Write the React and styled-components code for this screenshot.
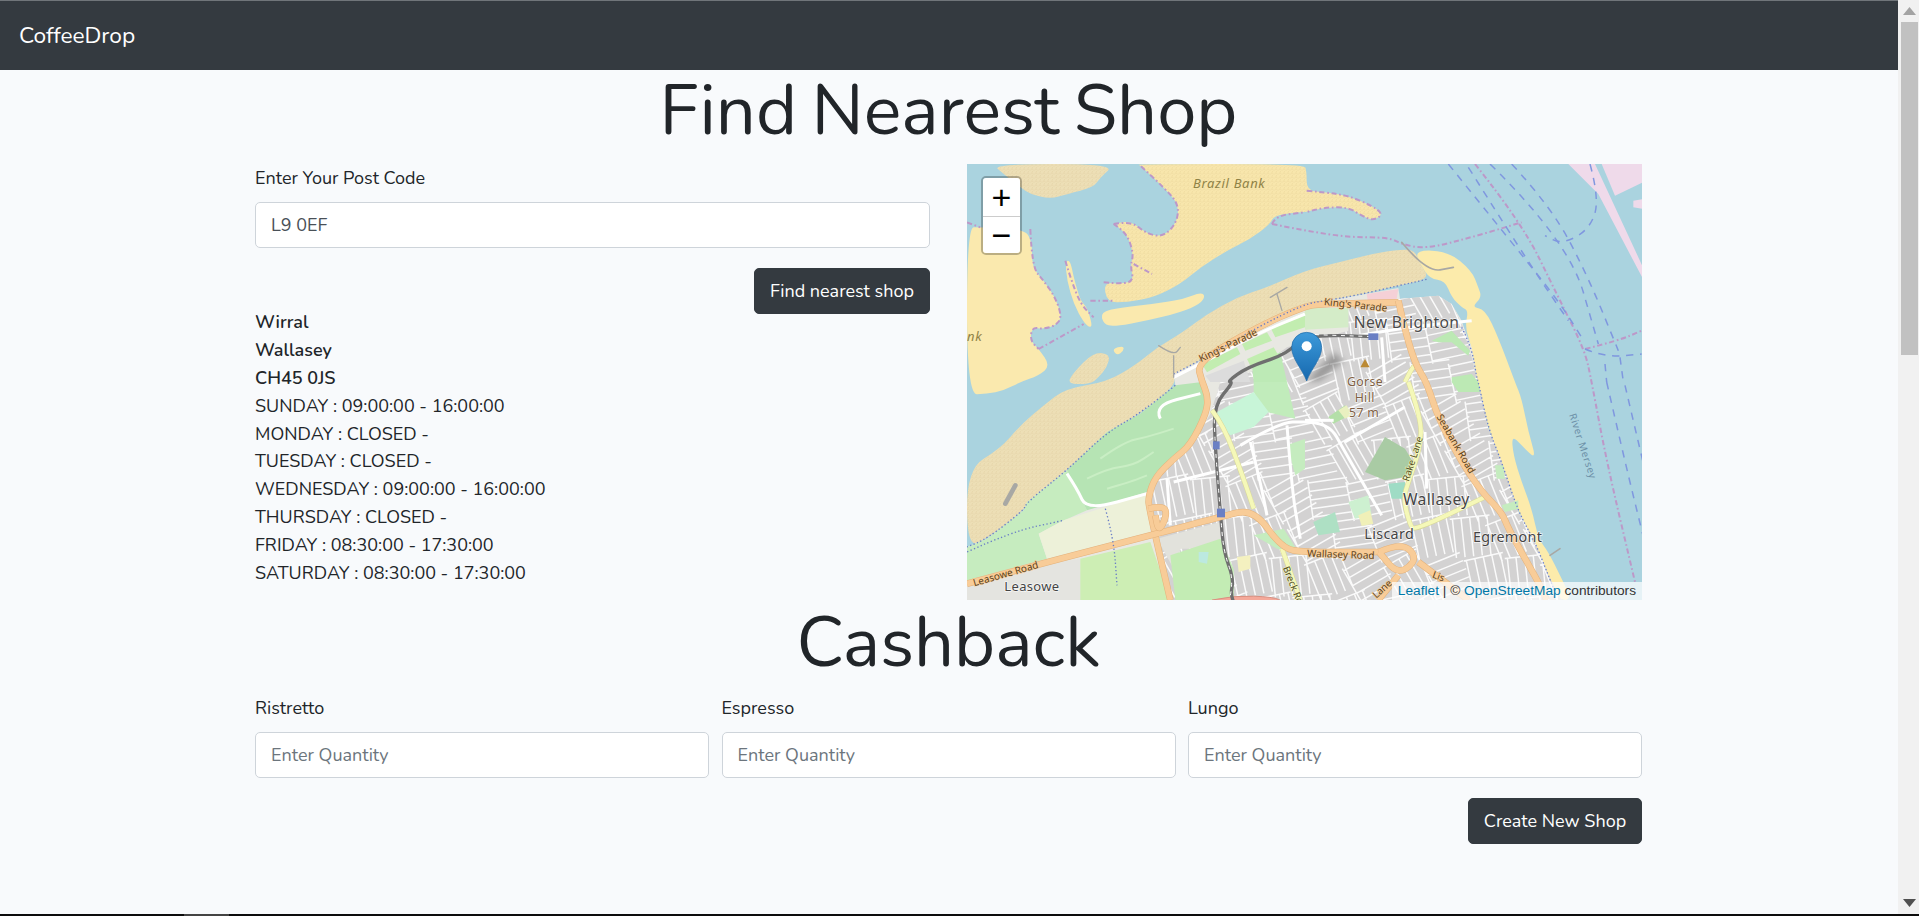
import React from "react";
import styled, { createGlobalStyle } from "styled-components";

const FONT = `"Nunito", "Lato", "Noto Sans", sans-serif`;

const GlobalStyle = createGlobalStyle`
  html, body {
    margin: 0;
    height: 100%;
    overflow: hidden;
    background: #f8fafc;
  }
  * { box-sizing: border-box; }
`;

const Page = styled.div`
  display: grid;
  grid-template-columns: 1fr 21px;
  grid-template-rows: 1fr 2px;
  width: 100%;
  height: 916px;
  overflow: hidden;
  font-family: ${FONT};
  font-size: 18px;
  line-height: 28px;
  color: #212529;
`;

const Main = styled.main`
  min-width: 0;
  overflow: hidden;
`;

const Navbar = styled.nav`
  display: flex;
  align-items: center;
  height: 70px;
  padding: 0 19px;
  background: #343a40;
  border-top: 1px solid #70757a;
`;

const Brand = styled.a`
  font-size: 22.7px;
  color: #fff;
`;

const Container = styled.div`
  width: 1387px;
  margin-left: 255px;
`;

const Title = styled.h1`
  margin: 0;
  height: ${(p) => p.$height}px;
  padding-top: ${(p) => p.$top}px;
  font-size: 70.5px;
  font-weight: 400;
  line-height: 82px;
  word-spacing: -3.6px;
  text-align: center;
`;

const TwoColumns = styled.div`
  display: grid;
  grid-template-columns: 675px 675px;
  column-gap: 37px;
`;

const ThreeColumns = styled.div`
  display: grid;
  grid-template-columns: repeat(3, 1fr);
  column-gap: 12.5px;
`;

const Field = styled.div`
  display: flex;
  flex-direction: column;
`;

const Label = styled.label`
  height: 28px;
  margin-bottom: 10px;
`;

const Input = styled.input`
  width: 100%;
  height: 46px;
  padding: 0 15px;
  font: inherit;
  color: #495057;
  background: #fff;
  border: 1px solid #ced4da;
  border-radius: 5px;
  &::placeholder { color: #6c757d; opacity: 1; }
`;

const ButtonRow = styled.div`
  display: flex;
  justify-content: flex-end;
  margin: 20px 0 ${(p) => p.$after}px;
`;

const Button = styled.button`
  height: 46px;
  width: ${(p) => p.$width}px;
  padding: 0;
  font: inherit;
  color: #fff;
  background: #343a40;
  border: 1px solid #343a40;
  border-radius: 5px;
`;

const Details = styled.div`
  display: flex;
  flex-direction: column;
`;

const Line = styled.div`
  height: 27.9px;
  font-weight: ${(p) => (p.$bold ? 600 : 400)};
`;

const MapFrame = styled.div`
  position: relative;
  height: 436px;
  overflow: hidden;
  background: #aad3df;
`;

const MapSvg = styled.svg`
  display: block;
  width: 675px;
  height: 436px;
`;

const ZoomControl = styled.div`
  position: absolute;
  left: 14px;
  top: 12px;
  width: 41px;
  border: 2px solid rgba(0, 0, 0, 0.25);
  border-radius: 5px;
  overflow: hidden;
  background-clip: padding-box;
`;

const ZoomButton = styled.a`
  display: flex;
  align-items: center;
  justify-content: center;
  height: 37.5px;
  font-family: "Liberation Sans", Arial, sans-serif;
  font-size: 34px;
  font-weight: 400;
  color: #000;
  background: #fff;
  & + & { border-top: 1px solid #ccc; }
`;

const Attribution = styled.div`
  position: absolute;
  right: 0;
  bottom: 0;
  height: 18px;
  padding: 0 6px;
  font-family: "Liberation Sans", Arial, sans-serif;
  font-size: 13.7px;
  line-height: 18px;
  color: #333;
  background: rgba(255, 255, 255, 0.7);
`;

const AttributionLink = styled.a`
  color: #0078a8;
`;

const Scrollbar = styled.aside`
  display: flex;
  flex-direction: column;
  align-items: center;
  padding-left: 2px;
  background: #f1f1f1;
`;

const ScrollArrow = styled.div`
  display: flex;
  align-items: center;
  justify-content: center;
  flex: none;
  height: 22px;
  width: 17px;
`;

const ScrollThumb = styled.div`
  flex: none;
  width: 17px;
  height: 333px;
  background: #c1c1c1;
`;

const ScrollSpace = styled.div`
  flex: 1;
`;

const BottomEdge = styled.div`
  grid-column: 1 / -1;
  background: #0c0c0c;
  display: flex;
`;

const BottomSegment = styled.div`
  margin-left: 184px;
  width: 45px;
  background: #444;
`;

// the map was traced from zoomed crops, every crop 1014 wide and 654 high
const shift = (s, dx, dy) =>
  s.trim().split(/\s+/).map((p) => {
    const [x, y] = p.split(",").map(Number);
    return [x + dx, y + dy];
  });
const q1 = (s) => shift(s, 0, 0);
const q2 = (s) => shift(s, 1014, 0);
const q3 = (s) => shift(s, 0, 654);
const q4 = (s) => shift(s, 1014, 654);

// rounds the corners of a traced outline
const curve = (pts, closed) => {
  const mid = (a, b) => [(a[0] + b[0]) / 2, (a[1] + b[1]) / 2];
  if (closed) {
    let d = `M${mid(pts[pts.length - 1], pts[0]).join(" ")}`;
    pts.forEach((p, i) => {
      d += `Q${p.join(" ")} ${mid(p, pts[(i + 1) % pts.length]).join(" ")}`;
    });
    return d + "Z";
  }
  let d = `M${pts[0].join(" ")}`;
  for (let i = 1; i < pts.length - 1; i++) {
    d += `Q${pts[i].join(" ")} ${mid(pts[i], pts[i + 1]).join(" ")}`;
  }
  return d + `L${pts[pts.length - 1].join(" ")}`;
};

const area = (pts) => curve(pts, true);
const way = (pts) => curve(pts, false);
const flat = (pts) => pts.map((p) => p.join(",")).join(" ");

const LOW_SAND = [
  q1("75,0 445,0 400,40 380,70 300,90 250,105 190,90 160,70 110,30"),
  q1("300,660 320,625 380,565 430,570 420,610 395,640 370,660"),
].map(area);

const BRAZIL_BANK = [
  ...q1("510,0 1010,0"), ...q2("5,20 5,80 60,85 130,95 200,125 235,150 205,170 170,155 130,130 60,130 0,145"),
  ...q1("990,145 920,155 910,180 850,225 780,260 700,310 640,360 560,400 480,415 420,415 410,355 465,360 500,350 490,305 500,270 480,210 440,180 490,170 540,210 590,218 630,175 635,120 590,70 520,5"),
];

const LEFT_SAND = [
  ...q1("0,190 40,190 170,195 195,230 195,310 230,350 265,400 285,460 265,485 230,495 195,490 190,530 215,555 250,605 215,635 160,654"),
  ...q3("110,26 60,36 0,38"),
];

const LENS = q1("400,445 460,430 560,420 650,405 700,385 715,395 700,420 640,445 540,470 440,488 410,480");
const FINGER = q1("295,290 310,290 320,340 340,410 360,430 375,480 370,492 350,475 320,420 300,350");
const SPECK = q1("435,555 470,545 470,560 450,575");

const DUNES = [
  ...q3("0,260 100,200 160,130 230,70 295,20"),
  ...q1("420,654 510,600 570,550 640,510 720,450 810,400 900,370 1014,320"),
  ...q2("100,295 200,270 290,255 330,260 345,300 375,345 280,365 150,395 60,410 0,420"),
  ...q1("870,490 700,590 620,630"),
  ...q3("625,10 520,95 420,150 300,265 180,360 170,385 60,470 0,495"),
];

const BEACH = [
  ...q2("330,258 430,262 500,320 520,370 530,400 500,430 540,435 580,520 630,654"),
  ...q4("650,50 670,150 695,235 650,190 620,160 625,220 650,300 680,380 700,470 730,510 770,590 800,654 760,654 730,580 690,480 640,390 590,240 550,140 520,0"),
  ...q2("515,640 500,550 480,490 490,440 470,430 440,400 420,350 375,345 345,300"),
];

const LAND = [
  ...q2("0,420 60,412 150,395 280,372 285,405 400,395 440,420 470,470 480,500 500,550 515,640"),
  ...q4("520,0 550,140 590,240 640,390 690,480 730,580 770,654"),
  ...q3("0,654 0,495 60,470 170,385 180,360 300,265 420,150 520,95 625,10"),
  ...q1("620,630 700,590 870,490"),
];

const URBAN =
  "960,550 1144,500 1144,432 1294,405 1414,395 1454,420 1494,500 1529,640 1534,654 1564,794 1604,894 1654,1044 1704,1134 1744,1234 1784,1308 600,1308 570,1100 545,1000 600,900 670,850 730,750 760,654 860,620";

// terraced streets: small blocks of parallel roads, turned block by block
const TERRACE_ANGLES = [-22, 68, -12, 78, -30, 60, 84, -8];
const terraces = () => {
  const size = 118;
  let d = "";
  for (let j = 0; j < 9; j++) {
    for (let i = 0; i < 11; i++) {
      const cx = 570 + i * size + (j % 2) * 47;
      const cy = 410 + j * size;
      const zone = cx > 1250 ? 0 : 2;
      const a = (TERRACE_ANGLES[(i * 3 + j * 5 + zone) % 8] * Math.PI) / 180;
      const [ux, uy] = [Math.cos(a), Math.sin(a)];
      for (let k = -2; k <= 2; k++) {
        const ox = cx - uy * k * 26;
        const oy = cy + ux * k * 26;
        d += `M${ox - (ux * size) / 2} ${oy - (uy * size) / 2}L${ox + (ux * size) / 2} ${oy + (uy * size) / 2}`;
      }
      // the cross streets closing the block
      d += `M${cx - ux * 59 - uy * 60} ${cy - uy * 59 + ux * 60}L${cx - ux * 59 + uy * 60} ${cy - uy * 59 - ux * 60}`;
    }
  }
  return d;
};
const TERRACES = terraces();

const GREENS = [
  ["#c6ecbf", q3("0,496 60,470 170,385 180,360 300,265 360,385 280,420 215,455 240,530 20,590 0,596")],
  ["#b6e4b4", q3("300,265 420,150 520,95 625,10 705,0 722,60 720,90 660,200 590,250 540,330 360,385")],
  ["#edf1d9", q3("215,455 290,415 540,335 550,450 240,530")],
  ["#e4e4e0", q3("0,610 240,545 340,530 340,654 0,654")],
  ["#cdeeb4", q3("340,530 550,480 610,654 340,654")],
  ["#e2e2dc", q3("570,470 760,420 770,500 640,500 620,560")],
  ["#c3ecb4", q3("610,520 760,470 800,560 800,654 625,654")],
  ["#c1ecbb", q3("860,0 960,0 985,110 900,90 860,30")],
  ["#c8f5d8", q3("750,90 860,30 905,90 860,135 790,160 760,130")],
  ["#bdeab6", q1("855,605 940,565 960,654 860,654")],
  ["#dcdcdc", q1("715,635 830,590 850,654 730,654")],
  ["#c2edb0", q1("705,600 810,550 820,570 720,625")],
  ["#c2edb0", q1("825,540 900,505 915,530 835,560")],
  ["#c2edb0", q1("910,490 1014,445 1014,490 925,520")],
  ["#c2edb0", q1("840,585 920,550 935,575 850,605")],
  ["#d4ecc8", q2("0,432 130,432 130,490 0,497")],
  ["#f5d0d6", q2("185,390 280,375 275,405 190,420")],
  ["#bce9b4", q2("380,530 440,500 495,560 490,575 440,535 400,535")],
  ["#bce9b4", q2("440,640 500,630 520,654 440,654")],
  ["#bce9b4", q4("440,0 520,0 525,30 460,30")],
  ["#a9cba4", q4("180,270 240,165 300,200 330,250 300,285 240,295")],
  ["#9fdcc5", q4("250,305 300,300 300,350 260,350")],
  ["#cdf0d0", q4("130,360 190,340 200,400 150,410")],
  ["#f0f0b8", q4("160,400 195,385 205,425 170,432")],
  ["#aee0c4", q4("25,420 90,390 105,450 40,460")],
  ["#b4dfa8", q4("70,105 120,70 135,100 85,125")],
  ["#e9f0c0", q4("100,85 125,70 140,100 120,110")],
  ["#c5ecbf", q4("570,250 595,250 600,290 575,290")],
  ["#c5ecbf", q4("590,370 640,355 640,380 600,390")],
  ["#c5ecbf", q3("860,460 950,440 1000,520 930,500")],
  ["#bce9e0", q3("695,510 725,510 720,545 695,540")],
  ["#f4f1c0", q3("810,525 850,520 850,560 815,570")],
  ["#c5ecbf", q3("960,190 1014,170 1014,260 985,280")],
];

const MAIN_ROADS = [
  [...q3("610,654 545,380 545,340 565,285 620,230 670,190 720,90 722,40 705,0"), ...q1("690,595 860,495 1014,425"), ...q2("60,420 280,415")],
  [...q2("280,410 295,480 330,600 365,654"), ...q4("400,110 470,240 530,330 590,390 610,440 660,530 700,600 725,654")],
  [...q3("0,605 240,540 550,460 760,405 860,380 945,500 1014,510"), ...q4("100,510 222,510")],
  q4("222,510 290,480 340,530 280,580 222,510"),
  q4("340,540 420,600 490,654"),
  q4("280,580 220,654"),
  q3("545,380 590,370 600,400 575,450 565,400"),
];

const YELLOW_ROADS = [
  q3("735,85 770,130 830,290 860,380"),
  q2("300,654 320,610 340,600"),
  q4("310,0 350,110 345,200 310,300 295,350 315,430 330,445 540,345"),
  q3("945,500 1000,654"),
];

const WHITE_ROADS = [
  q1("620,640 700,600 880,505 1014,450"),
  q3("580,110 560,70 700,35"),
  q3("300,275 330,320 360,385 540,335"),
  q3("620,300 860,240"),
  q3("820,190 940,120 1014,120"),
  q3("960,130 975,330 1000,470"),
  q3("850,180 880,300 900,400"),
  q3("600,290 610,430"),
  q4("0,120 70,120 120,210 230,400"),
  q4("120,180 300,75"),
  q3("1014,115 1100,115"),
  q2("130,520 300,490 500,470"),
  q2("230,520 240,654"),
  q4("360,150 365,320"),
];

const BOUNDARIES = [
  q1("440,180 490,170 540,210 590,218 630,175 635,120 590,70 520,5"),
  q1("410,355 465,360 500,350 490,305 500,270 480,210 440,180"),
  q1("500,300 555,330"),
  q1("295,290 310,340 340,420 380,460"),
  q1("0,175 40,190"),
  q1("190,195 195,310 230,350 265,400 285,460 265,485 230,495 195,490 190,530 215,555"),
  q1("215,555 350,480"),
  q1("370,410 440,410"),
  [...q1("915,180 1014,200"), ...q2("130,220 250,220 290,240 360,255 500,220 650,175")],
  q1("915,180 925,155 1014,145"),
  q2("5,80 60,85 130,95 200,125 235,150 205,170 170,155 130,130 60,130 0,145"),
  [...q2("510,0 650,175 760,400 840,560 860,654"), ...q4("905,240 990,600")],
  q2("840,555 940,530 1010,500"),
];

const SHIPPING = [
  q2("430,0 620,235 760,410 830,520"),
  q2("490,10 660,280 790,470"),
  q2("555,0 790,230 880,540"),
  q2("620,0 740,130 850,340 940,560"),
  q2("855,0 885,110 850,200 770,240 720,215"),
  q2("840,555 900,580 1010,570"),
  q2("900,600 905,654"),
  q2("945,580 955,654"),
  q4("905,0 960,240 1014,460"),
  q4("960,10 1014,240"),
];

const COAST_DOTS = [
  [...q1("620,630 700,590 870,490 1014,420"), ...q2("60,410 150,395 280,365 370,345")],
  q3("625,10 520,95 420,150 300,265 180,360 170,385 60,470 0,495"),
  [...q2("470,490 500,550 515,640"), ...q4("520,0 550,140 590,240 640,390 690,480 730,580 750,630")],
  q3("415,380 440,470 450,610"),
  [[0, 654 + 510], ...q3("130,450 290,415")],
];

const DOCKS = [
  q2("790,0 870,0 1014,310 1014,345 880,90"),
  q2("890,0 1014,0 1014,55 930,95"),
  q2("985,110 1014,105 1014,135 985,130"),
];

const GROYNES = [
  [q1("910,400 960,370"), 4],
  [q1("930,390 945,440"), 4],
  [q1("575,545 620,575 640,550"), 4],
  [q1("620,575 620,640"), 4],
  [q2("290,235 365,325 445,310"), 5],
  [q3("115,365 145,310"), 14],
  [q4("735,520 765,500"), 5],
];

const Road = ({ pts, casing, fill, width }) => (
  <>
    <path d={way(pts)} fill="none" stroke={casing} strokeWidth={width + 3} strokeLinejoin="round" />
    <path d={way(pts)} fill="none" stroke={fill} strokeWidth={width} strokeLinejoin="round" />
  </>
);

const Place = styled.text`
  font-family: "Noto Sans", sans-serif;
  font-size: ${(p) => p.$size}px;
  font-style: ${(p) => (p.$italic ? "italic" : "normal")};
  letter-spacing: ${(p) => p.$spacing || 0}px;
  fill: ${(p) => p.$color};
  stroke: ${(p) => p.$halo || "rgba(255,255,255,0.75)"};
  stroke-width: 4px;
  paint-order: stroke;
`;

const LABELS = [
  { t: "Brazil Bank", x: 678, y: 73, size: 39, color: "#8f8246", italic: true, spacing: 2, halo: "transparent" },
  { t: "nk", x: 0, y: 530, size: 39, color: "#8f8246", italic: true, spacing: 2, halo: "transparent" },
  { t: "King's Parade", x: 702, y: 595, size: 30, color: "#5c4320", rotate: -26, halo: "rgba(248,205,150,0.8)" },
  { t: "King's Parade", x: 1070, y: 423, size: 30, color: "#5c4320", rotate: 6, halo: "rgba(248,205,150,0.8)" },
  { t: "New Brighton", x: 1160, y: 492, size: 47, color: "#4a4a4a", spacing: 1 },
  { t: "Gorse", x: 1140, y: 666, size: 37, color: "#7e5f43", spacing: 1 },
  { t: "Hill", x: 1163, y: 714, size: 37, color: "#7e5f43", spacing: 1 },
  { t: "57 m", x: 1146, y: 760, size: 37, color: "#7e5f43", spacing: 1 },
  { t: "Seabank Road", x: 1408, y: 758, size: 30, color: "#5c4320", rotate: 60, halo: "rgba(248,205,150,0.8)" },
  { t: "Rake Lane", x: 1325, y: 954, size: 29, color: "#4f4a20", rotate: -72, halo: "rgba(247,250,191,0.8)" },
  { t: "Wallasey", x: 1308, y: 1022, size: 47, color: "#444", spacing: 1 },
  { t: "Liscard", x: 1192, y: 1126, size: 43, color: "#444", spacing: 1 },
  { t: "Egremont", x: 1518, y: 1134, size: 43, color: "#444", spacing: 1 },
  { t: "Wallasey Road", x: 1020, y: 1178, size: 30, color: "#5c4320", rotate: 2, halo: "rgba(248,205,150,0.8)" },
  { t: "Leasowe Road", x: 22, y: 1267, size: 30, color: "#5c4320", rotate: -16, halo: "rgba(248,205,150,0.8)" },
  { t: "Leasowe", x: 112, y: 1280, size: 39, color: "#444", spacing: 1 },
  { t: "Breck Road", x: 947, y: 1212, size: 29, color: "#4f4a20", rotate: 68, halo: "rgba(247,250,191,0.8)" },
  { t: "River Mersey", x: 1806, y: 752, size: 30, color: "#6b8ea6", rotate: 72, spacing: 2, halo: "transparent" },
  { t: "Lane", x: 1228, y: 1304, size: 29, color: "#5c4320", rotate: -42, halo: "rgba(248,205,150,0.8)" },
  { t: "Lis", x: 1394, y: 1240, size: 29, color: "#5c4320", rotate: 20, halo: "rgba(248,205,150,0.8)" },
];

function MapDrawing() {
  return (
    <MapSvg viewBox="0 0 2025 1308" preserveAspectRatio="none" aria-hidden="true">
      <defs>
        <pattern id="stipple" width="12" height="12" patternUnits="userSpaceOnUse">
          <circle cx="3" cy="3" r="1.5" fill="#b89a60" opacity="0.4" />
          <circle cx="9" cy="6" r="1.4" fill="#b89a60" opacity="0.35" />
          <circle cx="4" cy="10" r="1.3" fill="#b89a60" opacity="0.3" />
        </pattern>
        <linearGradient id="pin" x1="0" y1="0" x2="0" y2="1">
          <stop offset="0" stopColor="#3d9ada" />
          <stop offset="1" stopColor="#1668ae" />
        </linearGradient>
        <filter id="soft" x="-30%" y="-30%" width="160%" height="160%">
          <feGaussianBlur stdDeviation="9" />
        </filter>
        <clipPath id="urban">
          <polygon points={URBAN} />
        </clipPath>
      </defs>

      <rect width="2025" height="1308" fill="#aad3df" />

      {DOCKS.map((p, i) => (
        <polygon key={i} points={flat(p)} fill="#efdaea" />
      ))}

      <path d={area(DUNES)} fill="#eddfb6" />
      <path d={area(DUNES)} fill="url(#stipple)" />
      {LOW_SAND.map((d, i) => (
        <g key={i}>
          <path d={d} fill="#eddfb6" />
          <path d={d} fill="url(#stipple)" />
        </g>
      ))}
      <path d={area(BRAZIL_BANK)} fill="#f8e6ac" />
      <path d={area(BRAZIL_BANK)} fill="url(#stipple)" />
      <path d={area(LEFT_SAND)} fill="#fae9ae" />
      <path d={area(LENS)} fill="#fae9ae" />
      <path d={area(FINGER)} fill="#fae9ae" />
      <path d={area(SPECK)} fill="#fae9ae" />
      <path d={area(BEACH)} fill="#fcebab" />
      <path d={area(q2("275,368 365,350 385,395 285,402"))} fill="#aad3df" />

      <polygon points={flat(LAND)} fill="#e8e8e2" />
      <polygon points={URBAN} fill="#d3d2d2" />

      <path d={TERRACES} clipPath="url(#urban)" fill="none" stroke="#fafafa" strokeWidth="4.5" />

      {GREENS.map(([c, p], i) => (
        <polygon key={i} points={flat(p)} fill={c} />
      ))}
      <g fill="none" stroke="#c9eec4" strokeWidth="6">
        <path d={way(q3("360,290 420,260 500,250 560,210"))} />
        <path d={way(q3("400,230 470,180 540,165 620,140"))} />
        <path d={way(q3("420,320 490,300 540,280"))} />
      </g>

      {WHITE_ROADS.map((p, i) => (
        <path key={i} d={way(p)} fill="none" stroke="#fff" strokeWidth="9" strokeLinejoin="round" />
      ))}

      <path d={way(q3("735,654 800,640 920,645 950,660"))} fill="#f4a99a" stroke="#d98f80" strokeWidth="3" />

      {/* railway */}
      <path d={way([...q3("800,660 790,640 800,590 770,510 760,390 745,200 740,70 800,0"), ...q1("780,654 840,610 960,570"), ...q2("0,512 210,518")])} fill="none" stroke="#6f6f6f" strokeWidth="10" strokeLinejoin="round" />
      <path d={way(q3("790,640 800,590 770,510 760,390 745,200 740,70"))} fill="none" stroke="#fff" strokeWidth="3" strokeDasharray="12 14" />
      <path d={way(q2("30,512 210,518"))} fill="none" stroke="#fff" strokeWidth="3" strokeDasharray="12 14" />

      {YELLOW_ROADS.map((p, i) => (
        <Road key={i} pts={p} casing="#d8d898" fill="#f5f8b8" width={12} />
      ))}
      {MAIN_ROADS.map((p, i) => (
        <Road key={i} pts={p} casing="#e4b27a" fill="#f8cc98" width={17} />
      ))}

      <rect x="1204" y="508" width="30" height="20" fill="#6a7fc4" />
      <rect x="738" y="832" width="20" height="24" fill="#6a7fc4" />
      <rect x="750" y="1034" width="24" height="26" fill="#6a7fc4" />

      {BOUNDARIES.map((p, i) => (
        <path key={i} d={way(p)} fill="none" stroke="#bd98c8" strokeWidth="6" strokeDasharray="16 8 5 8" />
      ))}
      {SHIPPING.map((p, i) => (
        <path key={i} d={way(p)} fill="none" stroke="#7f97df" strokeWidth="4.5" strokeDasharray="22 20" />
      ))}
      {COAST_DOTS.map((p, i) => (
        <path key={i} d={way(p)} fill="none" stroke="#6a7ec6" strokeWidth="4" strokeDasharray="4 7" />
      ))}
      {GROYNES.map(([p, w], i) => (
        <path key={i} d={way(p)} fill="none" stroke="#a8a8a4" strokeWidth={w} strokeLinecap="round" />
      ))}
      <polygon points="1180,610 1208,610 1194,585" fill="#bb8a35" />

      {LABELS.map((l) => (
        <Place
          key={l.t + l.x}
          x={l.x}
          y={l.y}
          $size={l.size}
          $color={l.color}
          $italic={l.italic}
          $spacing={l.spacing}
          $halo={l.halo}
          transform={l.rotate ? `rotate(${l.rotate} ${l.x} ${l.y})` : undefined}
        >
          {l.t}
        </Place>
      ))}

      {/* marker */}
      <polygon points="1019,651 1100,565 1130,590 1060,650" fill="#555" opacity="0.45" filter="url(#soft)" />
      <path
        d="M1019 651C1006 615 974 585 974 550A45 45 0 0 1 1064 550C1064 585 1032 615 1019 651Z"
        fill="url(#pin)"
        stroke="#1f6aa8"
        strokeWidth="2"
      />
      <circle cx="1019" cy="547" r="15" fill="#fff" />
    </MapSvg>
  );
}

const Triangle = ({ up, color }) => (
  <svg width="13" height="8" viewBox="0 0 13 8" aria-hidden="true">
    <polygon points={up ? "6.5,0 13,8 0,8" : "0,0 13,0 6.5,8"} fill={color} />
  </svg>
);

const HOURS = [
  "SUNDAY : 09:00:00 - 16:00:00",
  "MONDAY : CLOSED -",
  "TUESDAY : CLOSED -",
  "WEDNESDAY : 09:00:00 - 16:00:00",
  "THURSDAY : CLOSED -",
  "FRIDAY : 08:30:00 - 17:30:00",
  "SATURDAY : 08:30:00 - 17:30:00",
];

export default function App() {
  return (
    <Page>
      <GlobalStyle />
      <Main>
        <Navbar>
          <Brand>CoffeeDrop</Brand>
        </Navbar>
        <Container>
          <Title $height={94} $top={0}>Find Nearest Shop</Title>
          <TwoColumns>
            <div>
              <Field>
                <Label>Enter Your Post Code</Label>
                <Input defaultValue="L9 0EF" />
              </Field>
              <ButtonRow $after={-6}>
                <Button $width={176}>Find nearest shop</Button>
              </ButtonRow>
              <Details>
                <Line $bold>Wirral</Line>
                <Line $bold>Wallasey</Line>
                <Line $bold>CH45 0JS</Line>
                {HOURS.map((h) => (
                  <Line key={h}>{h}</Line>
                ))}
              </Details>
            </div>
            <MapFrame>
              <MapDrawing />
              <ZoomControl>
                <ZoomButton>+</ZoomButton>
                <ZoomButton>−</ZoomButton>
              </ZoomControl>
              <Attribution>
                <AttributionLink>Leaflet</AttributionLink> | ©{" "}
                <AttributionLink>OpenStreetMap</AttributionLink> contributors
              </Attribution>
            </MapFrame>
          </TwoColumns>
          <Title $height={94} $top={2}>Cashback</Title>
          <ThreeColumns>
            {["Ristretto", "Espresso", "Lungo"].map((name) => (
              <Field key={name}>
                <Label>{name}</Label>
                <Input placeholder="Enter Quantity" />
              </Field>
            ))}
          </ThreeColumns>
          <ButtonRow $after={0}>
            <Button $width={174}>Create New Shop</Button>
          </ButtonRow>
        </Container>
      </Main>
      <Scrollbar>
        <ScrollArrow>
          <Triangle up color="#a3a3a3" />
        </ScrollArrow>
        <ScrollThumb />
        <ScrollSpace />
        <ScrollArrow>
          <Triangle color="#505050" />
        </ScrollArrow>
      </Scrollbar>
      <BottomEdge>
        <BottomSegment />
      </BottomEdge>
    </Page>
  );
}
